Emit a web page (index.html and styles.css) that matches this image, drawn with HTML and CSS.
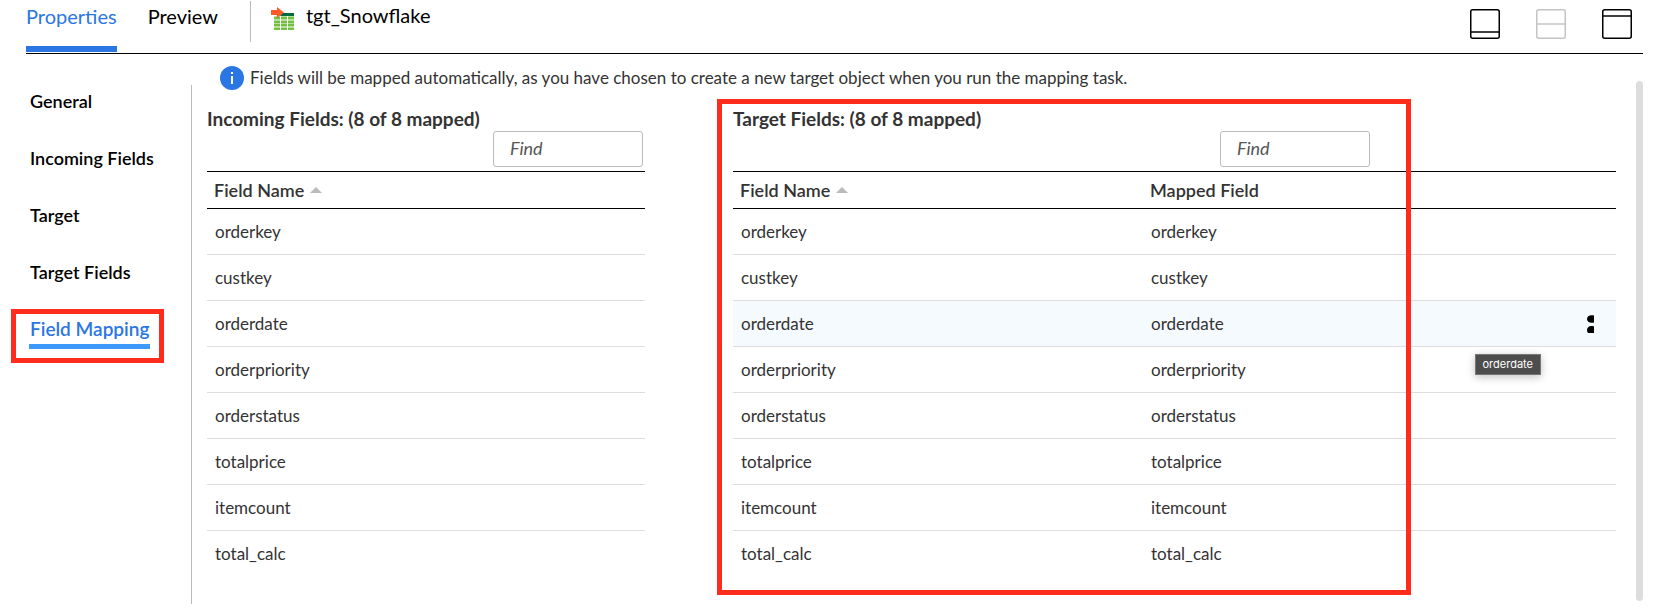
FILE: index.html
```html
<!DOCTYPE html>
<html lang="en">
<head>
<meta charset="utf-8">
<title>tgt_Snowflake</title>
<link rel="stylesheet" href="styles.css">
</head>
<body>
<header class="topbar">
  <nav class="tabs" aria-label="Panel tabs">
    <a class="tab tab-active" href="#properties">Properties</a>
    <a class="tab" href="#preview">Preview</a>
  </nav>
  <div class="object">
    <svg class="object-icon" width="24" height="24" viewBox="0 0 24 24" aria-hidden="true">
      <path fill="#b5e09b" d="M3 9h20v14H3z"/>
      <path fill="#006b3f" d="M11 6h12v3H9z"/>
      <path fill="#72bf44" d="M3 10h20v2H3zM3 14h20v2H3zM3 17h20v2H3zM3 21h20v2H3z"/>
      <path fill="#fff" d="M9 9h1v14H9zM16 9h1v14h-1z"/>
      <path fill="#ff5a26" d="M0 3h6V0l7 5.500-7 5.500V8H0z"/>
    </svg>
    <h1 class="object-name">tgt_Snowflake</h1>
  </div>
  <div class="views">
    <button class="view" type="button" aria-label="Minimize panel"><svg width="30" height="30" viewBox="0 0 30 30"><rect x=".75" y=".75" width="28.500" height="28.500" rx="2"/><path d="M1 23h28"/></svg></button>
    <button class="view" type="button" aria-label="Split panel" disabled><svg width="30" height="30" viewBox="0 0 30 30"><rect x=".75" y=".75" width="28.500" height="28.500" rx="2"/><path d="M1 15h28"/></svg></button>
    <button class="view" type="button" aria-label="Maximize panel"><svg width="30" height="30" viewBox="0 0 30 30"><rect x=".75" y=".75" width="28.500" height="28.500" rx="2"/><path d="M1 7h28"/></svg></button>
  </div>
</header>
<div class="body">
  <nav class="side" aria-label="Sections">
    <a class="side-link" href="#general">General</a>
    <a class="side-link" href="#incoming">Incoming Fields</a>
    <a class="side-link" href="#target">Target</a>
    <a class="side-link" href="#target-fields">Target Fields</a>
    <a class="side-link side-active" href="#mapping">Field Mapping<span class="mark mark-side"></span></a>
  </nav>
  <main class="main">
    <p class="info">
      <svg width="24" height="24" viewBox="0 0 24 24" aria-hidden="true"><circle cx="12" cy="12" r="12" fill="#2b76e5"/><path fill="#fff" d="M11 6h2v2h-2zM11 10h2v8h-2z"/></svg>
      <span>Fields will be mapped automatically, as you have chosen to create a new target object when you run the mapping task.</span>
    </p>
    <div class="panels">
      <section class="panel">
        <h2 class="panel-title">Incoming Fields: (8 of 8 mapped)</h2>
        <div class="search"><input class="find" type="search" placeholder="Find" aria-label="Find incoming fields"></div>
        <table class="fields">
          <thead><tr><th>Field Name<svg class="sort" width="12" height="6" viewBox="0 0 12 6"><path d="M0 6l6-6 6 6z"/></svg></th></tr></thead>
          <tbody>
            <tr><td>orderkey</td></tr>
            <tr><td>custkey</td></tr>
            <tr><td>orderdate</td></tr>
            <tr><td>orderpriority</td></tr>
            <tr><td>orderstatus</td></tr>
            <tr><td>totalprice</td></tr>
            <tr><td>itemcount</td></tr>
            <tr><td>total_calc</td></tr>
          </tbody>
        </table>
      </section>
      <section class="panel">
        <h2 class="panel-title">Target Fields: (8 of 8 mapped)</h2>
        <div class="search search-target"><input class="find" type="search" placeholder="Find" aria-label="Find target fields"></div>
        <table class="fields">
          <colgroup><col class="col-name"><col><col class="col-menu"></colgroup>
          <thead><tr><th>Field Name<svg class="sort" width="12" height="6" viewBox="0 0 12 6"><path d="M0 6l6-6 6 6z"/></svg></th><th>Mapped Field</th><th></th></tr></thead>
          <tbody>
            <tr><td>orderkey</td><td>orderkey</td><td></td></tr>
            <tr><td>custkey</td><td>custkey</td><td></td></tr>
            <tr class="hovered"><td>orderdate</td><td>orderdate</td><td class="menu-cell"><button class="menu" type="button" aria-label="Row actions"><svg width="7" height="18" viewBox="0 0 7 18"><path d="M7 .5v7C3 8.500 0 7 0 4S3-.5 7 .5zM7 11.500V18H1c-1.500-2-1-4.500 0-5.500C2.500 11 5 10.800 7 11.500z"/></svg></button><span class="tooltip" role="tooltip">orderdate</span></td></tr>
            <tr><td>orderpriority</td><td>orderpriority</td><td></td></tr>
            <tr><td>orderstatus</td><td>orderstatus</td><td></td></tr>
            <tr><td>totalprice</td><td>totalprice</td><td></td></tr>
            <tr><td>itemcount</td><td>itemcount</td><td></td></tr>
            <tr><td>total_calc</td><td>total_calc</td><td></td></tr>
          </tbody>
        </table>
        <span class="mark mark-panel"></span>
      </section>
    </div>
  </main>
  <div class="scrollbar"></div>
</div>
</body>
</html>
```
FILE: styles.css
```css
* { box-sizing: border-box; }
body {
  display: flex;
  flex-direction: column;
  min-height: 100vh;
  margin: 0;
  background: #fff;
  color: #333;
  font: 17px/24px Lato, "Open Sans", sans-serif;
}
a { color: inherit; text-decoration: none; }
h1, h2, p { margin: 0; }
button { padding: 0; border: 0; background: none; }
svg { display: block; }

.topbar {
  display: flex;
  height: 54px;
  margin: 0 19px 0 26px;
  border-bottom: 1px solid #000;
  color: #000;
}
.tabs {
  display: flex;
  gap: 31px;
  padding-right: 32px;
  font-size: 20px;
}
.tab { padding-top: 4px; border-bottom: 6px solid transparent; margin-bottom: 1px; }
.tab-active { color: #2b76e5; border-color: #2b76e5; }
.object {
  display: flex;
  height: 41px;
  margin-top: 1px;
  padding: 2px 0 0 20px;
  border-left: 1px solid #bbb;
}
.object-icon { margin: 4px 11px 0 0; }
.object-name { font-size: 20px; font-weight: 400; }
.views { display: flex; gap: 36px; margin: 9px 11px 0 auto; align-items: flex-start; }
.view svg { fill: none; stroke: #000; stroke-width: 1.5; }
.view:disabled svg { stroke: #c4c4c4; }

.body { display: flex; flex: 1; margin-right: 19px; }
.side {
  display: flex;
  flex-direction: column;
  align-items: flex-start;
  gap: 28px;
  width: 192px;
  margin: 31px 0 11px;
  padding: 2px 0 0 29px;
  border-right: 1px solid #bbb;
  color: #000;
  font-size: 18px;
  font-weight: 600;
}
.side-link { position: relative; padding: 2px 1px 3px; }
.side-active { color: #2b76e5; border-bottom: 5px solid #3d99fc; font-size: 19px; }
.mark { position: absolute; border: 5px solid #ff2b1d; pointer-events: none; }
.mark-side { inset: -6px -14px -19px -18px; }

.main { flex: 1; min-width: 0; padding: 12px 20px 0 15px; }
.info { display: flex; gap: 6px; padding-left: 13px; }
.panels {
  display: grid;
  grid-template-columns: 438fr 883fr;
  gap: 88px;
  margin-top: 17px;
}
.panel { position: relative; min-width: 0; }
.panel-title { font-size: 19px; line-height: 24px; font-weight: 700; }
.search { display: flex; justify-content: flex-end; padding: 0 2px 4px 0; }
.search-target { padding-right: 246px; }
.find {
  width: 150px;
  height: 36px;
  padding: 0 16px 2px;
  border: 1px solid #bbb;
  border-radius: 3px;
  color: #333;
  font: inherit;
  font-size: 18px;
  appearance: none;
}
.find::placeholder { color: #555; font-style: italic; opacity: 1; }

.fields {
  width: 100%;
  border-collapse: separate;
  border-spacing: 0;
  table-layout: fixed;
}
.fields th {
  height: 38px;
  padding: 0 7px 1px;
  border: solid #000;
  border-width: 1px 0;
  text-align: left;
  font-size: 18px;
  font-weight: 600;
}
.fields td { height: 46px; padding: 0 7px 0 8px; border-bottom: 1px solid #ddd; }
.fields tr:last-child td { border-bottom: 0; }
.col-name { width: 410px; }
.col-menu { width: 160px; }
.sort { display: inline-block; margin-left: 6px; vertical-align: 4px; fill: #bbb; }
.hovered { background: #f5faff; }
.fields .menu-cell { position: relative; padding-right: 22px; }
.menu { display: block; margin-left: auto; }
.tooltip {
  position: absolute;
  top: 53px;
  right: 75px;
  padding: 0 7px;
  border: 1px solid #777;
  background: #4d4d4d;
  color: #fff;
  font: 11px/19px Inter, sans-serif;
  box-shadow: 0 2px 8px rgba(0, 0, 0, .25);
}
.mark-panel { inset: -8px 205px auto -16px; height: 496px; }
.scrollbar { width: 7px; margin: 27px 0 14px; border-radius: 4px; background: #ddd; }
```
